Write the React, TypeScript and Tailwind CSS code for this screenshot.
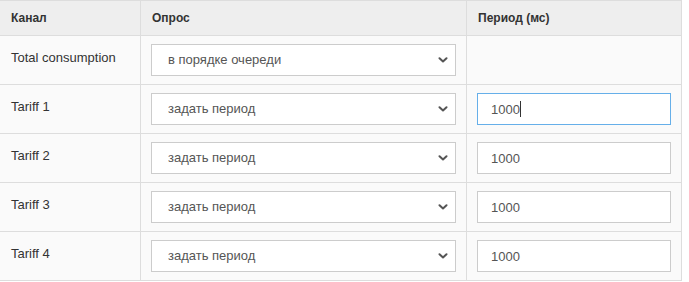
import { ChangeEvent, useState } from 'react'

type Row = {
  channel: string
  mode: 'queue' | 'period'
  period?: string
}

const ROWS: Row[] = [
  { channel: 'Total consumption', mode: 'queue' },
  { channel: 'Tariff 1', mode: 'period', period: '1000' },
  { channel: 'Tariff 2', mode: 'period', period: '1000' },
  { channel: 'Tariff 3', mode: 'period', period: '1000' },
  { channel: 'Tariff 4', mode: 'period', period: '1000' }
]

const MODE_LABELS: Record<Row['mode'], string> = {
  queue: 'в порядке очереди',
  period: 'задать период'
}

function Chevron(): JSX.Element {
  return (
    <svg
      viewBox="0 0 10 6"
      className="pointer-events-none absolute right-[4px] top-1/2 h-[6px] w-[10px] -translate-y-1/2 text-[#555]"
      fill="none"
      stroke="currentColor"
      strokeWidth="2"
      strokeLinecap="round"
      strokeLinejoin="round"
    >
      <path d="M1.5 1.2 5 4.5 8.5 1.2" />
    </svg>
  )
}

export default function App(): JSX.Element {
  const [rows, setRows] = useState<Row[]>(ROWS)

  const setMode = (idx: number, e: ChangeEvent<HTMLSelectElement>): void => {
    const mode = e.target.value as Row['mode']
    setRows(prev => prev.map((r, i) => (i === idx ? { ...r, mode } : r)))
  }

  const setPeriod = (idx: number, value: string): void => {
    setRows(prev => prev.map((r, i) => (i === idx ? { ...r, period: value } : r)))
  }

  return (
    <div className="bg-white h-[282px] text-[#333] font-['Liberation_Sans',Arial,sans-serif]">
      <div className="grid w-[682px] grid-cols-[141px_326px_215px] border-t border-[#ddd]">
        {/* шапка */}
        <div className="h-[35px] border-b border-r border-[#ddd] bg-[#eee] pl-[11px] text-[12px] font-bold leading-[34px]">
          Канал
        </div>
        <div className="h-[35px] border-b border-r border-[#ddd] bg-[#eee] pl-[11px] text-[12px] font-bold leading-[34px]">
          Опрос
        </div>
        <div className="h-[35px] border-b border-r border-[#ddd] bg-[#eee] pl-[11px] text-[12px] font-bold leading-[34px]">
          Период (мс)
        </div>

        {rows.map((row, idx) => (
          <div key={row.channel} className="contents">
            <div className="h-[49px] border-b border-r border-[#ddd] bg-[#fafafa] pl-[11px] pt-[7px] text-[13px] leading-[30px]">
              {row.channel}
            </div>
            <div className="h-[49px] border-b border-r border-[#ddd] bg-[#fafafa] px-[10px] py-2">
              <div className="relative">
                <select
                  value={row.mode}
                  onChange={e => setMode(idx, e)}
                  className="h-[32px] w-full appearance-none rounded-none border border-[#ccc] bg-white pl-[16px] text-[13px] text-[#555] outline-none font-['Liberation_Sans',Arial,sans-serif]"
                >
                  <option value="queue">{MODE_LABELS.queue}</option>
                  <option value="period">{MODE_LABELS.period}</option>
                </select>
                <span className="pointer-events-none absolute right-[4px] top-0 h-full w-[14px]">
                  <Chevron />
                </span>
              </div>
            </div>
            <div className="h-[49px] border-b border-r border-[#ddd] bg-[#fafafa] px-[10px] py-2">
              {row.mode === 'period' && (
                <div className="relative">
                  <input
                    type="text"
                    value={row.period ?? ''}
                    onChange={e => setPeriod(idx, e.target.value)}
                    className={
                      idx === 1
                        ? "h-[32px] w-full rounded-none border border-[#66afe9] bg-white pl-[13px] text-[13px] text-[#555] outline-none font-['Liberation_Sans',Arial,sans-serif]"
                        : "h-[32px] w-full rounded-none border border-[#ccc] bg-white pl-[13px] text-[13px] text-[#555] outline-none font-['Liberation_Sans',Arial,sans-serif]"
                    }
                  />
                  {idx === 1 && (
                    <span className="pointer-events-none absolute left-[43px] top-[8px] h-[16px] w-px bg-[#333]" />
                  )}
                </div>
              )}
            </div>
          </div>
        ))}
      </div>
    </div>
  )
}
